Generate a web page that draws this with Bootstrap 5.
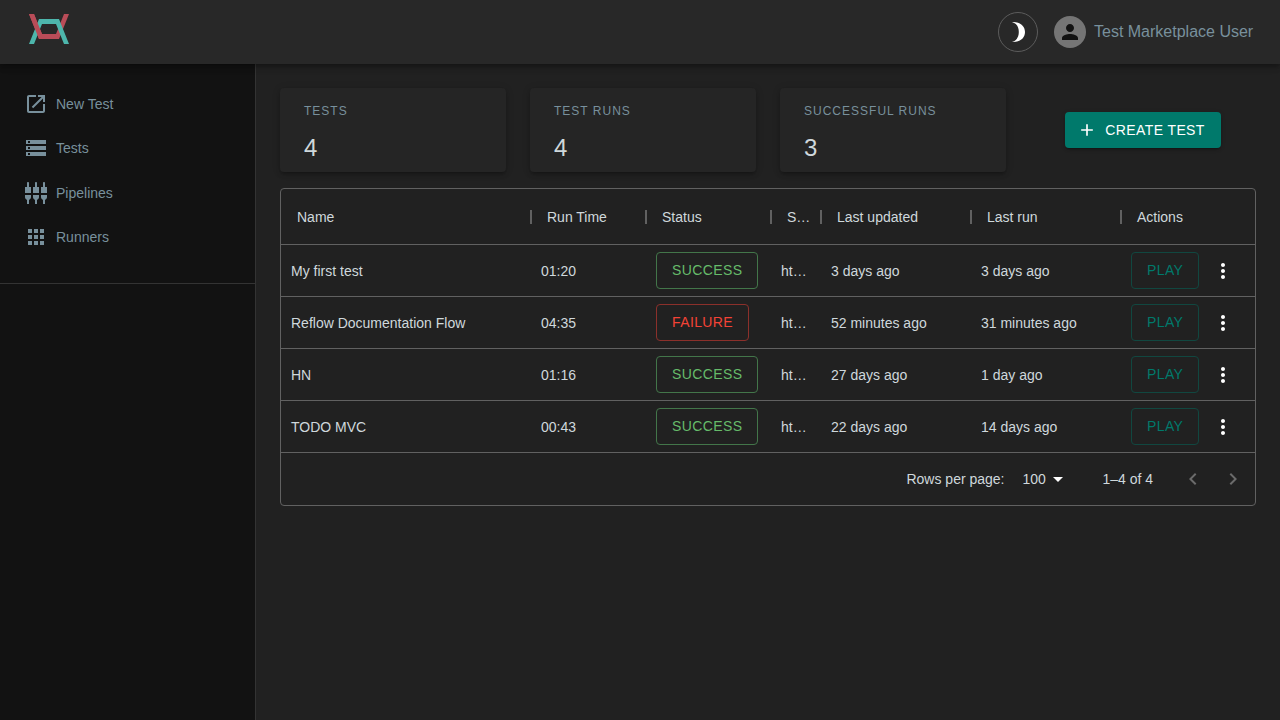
<!DOCTYPE html>
<html lang="en" data-bs-theme="dark">
<head>
<meta charset="utf-8">
<meta name="viewport" content="width=device-width, initial-scale=1">
<title>Tests</title>
<link href="https://cdn.jsdelivr.net/npm/bootstrap@5.3.0/dist/css/bootstrap.min.css" rel="stylesheet">
<style>
  :root { --muted: #78909c; --line: #616161; }
  body { background: #212121; color: #cfd8dc; font-family: "Liberation Sans", Arial, sans-serif; font-size: 14px; line-height: 20px; }
  svg { fill: currentColor; flex-shrink: 0; display: block; }
  main { min-width: 0; }
  .topbar { height: 64px; background: #282828; z-index: 2; box-shadow: 0 2px 4px -1px rgba(0,0,0,.2), 0 4px 5px rgba(0,0,0,.14), 0 1px 10px rgba(0,0,0,.12); }
  .logo-link { margin-left: 5px; margin-bottom: 6px; }
  .round-btn { width: 40px; height: 40px; border: 1px solid #5c5c5c; background: none; color: #fff; }
  .avatar { width: 32px; height: 32px; background: #757575; color: #121212; }
  .user-name { font-size: 16px; color: var(--muted); min-width: 162px; }
  .sidebar { width: 256px; background: #121212; border-right: 1px solid #333; flex-shrink: 0; }
  .side-nav { height: 220px; padding: 18px 24px 24px; border-bottom: 1px solid #333; }
  .side-nav a { color: var(--muted); }
  .stat { background: #252525; border-radius: 4px; height: 84px; padding: 4px 24px; box-shadow: 0 3px 3px -2px rgba(0,0,0,.2), 0 3px 4px rgba(0,0,0,.14), 0 1px 8px rgba(0,0,0,.12); }
  .stat dt { font-size: 12px; font-weight: 400; letter-spacing: 1px; line-height: 39px; color: var(--muted); text-transform: uppercase; }
  .stat dd { font-size: 24px; line-height: 34px; }
  .caps { font-size: 14px; letter-spacing: .028em; text-transform: uppercase; line-height: 25px; }
  .create { background: #00796b; color: #fff; border: 0; border-radius: 4px; height: 36px; padding: 0 16px 0 12px; box-shadow: 0 3px 1px -2px rgba(0,0,0,.2), 0 2px 2px rgba(0,0,0,.14), 0 1px 5px rgba(0,0,0,.12); }
  .panel { border: 1px solid var(--line); border-radius: 4px; }
  .grid-table { table-layout: fixed; width: 100%; border-collapse: separate; border-spacing: 0; }
  .grid-table th, .grid-table td { border-bottom: 1px solid var(--line); }
  .grid-table th { height: 56px; padding: 0 10px 0 16px; font-weight: 400; position: relative; }
  .grid-table th:not(:last-child)::after { content: ""; position: absolute; right: -1px; top: 21px; width: 2px; height: 14px; background: var(--line); }
  .grid-table td { height: 52px; padding: 0 10px; vertical-align: middle; }
  .col-name { width: 250px; }
  .col-time { width: 115px; }
  .col-status { width: 125px; }
  .col-url { width: 50px; }
  .col-date { width: 150px; }
  .outlined { background: none; border: 1px solid; border-radius: 4px; padding: 5px 15px; height: 37px; }
  .ok { color: #66bb6a; border-color: #43764a; }
  .bad { color: #f44336; border-color: #8b302b; }
  .go { color: #00796b; border-color: #114740; }
  .bare { background: none; border: 0; padding: 0; color: #fff; }
  .foot { height: 52px; padding-right: 2px; }
  .foot label { min-width: 100px; }
  .form-select.page-size { width: 48px; height: 24px; padding: 0 24px 0 0; font-size: 14px; line-height: 24px; color: inherit; border: 0; background-color: transparent; background-position: right center; background-size: 24px;
    background-image: url("data:image/svg+xml,%3csvg xmlns='http://www.w3.org/2000/svg' viewBox='0 0 24 24'%3e%3cpath fill='%23fff' d='M7 10l5 5 5-5z'/%3e%3c/svg%3e"); }
  .pager { width: 40px; height: 40px; color: #6b6b6b; }
</style>
</head>
<body>
<div class="d-flex flex-column min-vh-100">
  <header class="topbar d-flex align-items-center px-4 position-relative">
    <a href="#" class="logo-link" aria-label="Home">
      <svg width="40" height="30" viewBox="0 0 40 30">
        <path fill="#b94c58" d="M0 0H5L13 20H27L35 0H40L30 25H10Z"/>
        <path fill="#4db6ac" d="M0 30H5L13 10H27L35 30H40L30 5H10Z"/>
        <path fill="#b94c58" d="M0 0H5L13 20H20V25H10Z"/>
      </svg>
    </a>
    <button type="button" class="round-btn rounded-circle ms-auto me-3 p-0 d-flex align-items-center justify-content-center" aria-label="Toggle dark mode">
      <svg width="24" height="24" viewBox="0 0 24 24"><path d="M6 2C14 1.500 19 6 19 12S14 22.500 6 22C11 20.500 12.800 16.500 12.800 12S11 3.500 6 2Z"/></svg>
    </button>
    <span class="avatar rounded-circle d-flex align-items-center justify-content-center me-2">
      <svg width="24" height="24" viewBox="0 0 24 24"><path d="M12 12c2.210 0 4-1.790 4-4s-1.790-4-4-4-4 1.790-4 4 1.790 4 4 4zm0 2c-2.670 0-8 1.340-8 4v2h16v-2c0-2.660-5.330-4-8-4z"/></svg>
    </span>
    <span class="user-name">Test Marketplace User</span>
  </header>

  <div class="d-flex flex-grow-1">
    <nav class="sidebar">
      <ul class="side-nav list-unstyled d-flex flex-column mb-0">
        <li class="d-flex flex-fill align-items-center"><a href="#" class="d-flex align-items-center gap-2 text-decoration-none">
          <svg width="24" height="24" viewBox="0 0 24 24"><path d="M19 19H5V5h7V3H5c-1.110 0-2 .9-2 2v14c0 1.100.89 2 2 2h14c1.100 0 2-.9 2-2v-7h-2v7zM14 3v2h3.590l-9.830 9.830 1.410 1.410L19 6.410V10h2V3h-7z"/></svg>New Test</a></li>
        <li class="d-flex flex-fill align-items-center"><a href="#" class="d-flex align-items-center gap-2 text-decoration-none">
          <svg width="24" height="24" viewBox="0 0 24 24"><path d="M2 20h20v-4H2v4zm2-3h2v2H4v-2zM2 4v4h20V4H2zm4 3H4V5h2v2zm-4 7h20v-4H2v4zm2-3h2v2H4v-2z"/></svg>Tests</a></li>
        <li class="d-flex flex-fill align-items-center"><a href="#" class="d-flex align-items-center gap-2 text-decoration-none">
          <svg width="24" height="24" viewBox="0 0 24 24"><path d="M5 2c0-.55-.45-1-1-1s-1 .45-1 1v4H1v6h6V6H5V2zm4 14c0 1.300.84 2.400 2 2.820V23h2v-4.180c1.160-.41 2-1.510 2-2.820v-2H9v2zm-8 0c0 1.300.84 2.400 2 2.820V23h2v-4.180C6.160 18.400 7 17.300 7 16v-2H1v2zM21 6V2c0-.55-.45-1-1-1s-1 .45-1 1v4h-2v6h6V6h-2zm-8-4c0-.55-.45-1-1-1s-1 .45-1 1v4H9v6h6V6h-2V2zm4 14c0 1.300.84 2.400 2 2.820V23h2v-4.180c1.160-.41 2-1.510 2-2.820v-2h-6v2z"/></svg>Pipelines</a></li>
        <li class="d-flex flex-fill align-items-center"><a href="#" class="d-flex align-items-center gap-2 text-decoration-none">
          <svg width="24" height="24" viewBox="0 0 24 24"><path d="M4 8h4V4H4v4zm6 12h4v-4h-4v4zm-6 0h4v-4H4v4zm0-6h4v-4H4v4zm6 0h4v-4h-4v4zm6-10v4h4V4h-4zm-6 4h4V4h-4v4zm6 6h4v-4h-4v4zm0 6h4v-4h-4v4z"/></svg>Runners</a></li>
      </ul>
    </nav>

    <main class="flex-grow-1 p-4">
      <div class="row gx-4 mb-3">
        <div class="col-3"><dl class="stat mb-0"><dt>Tests</dt><dd class="mb-0">4</dd></dl></div>
        <div class="col-3"><dl class="stat mb-0"><dt>Test runs</dt><dd class="mb-0">4</dd></dl></div>
        <div class="col-3"><dl class="stat mb-0"><dt>Successful runs</dt><dd class="mb-0">3</dd></dl></div>
        <div class="col-3 d-flex align-items-center justify-content-center">
          <button type="button" class="create caps d-flex align-items-center gap-2">
            <svg width="20" height="20" viewBox="0 0 24 24"><path d="M19 13h-6v6h-2v-6H5v-2h6V5h2v6h6v2z"/></svg>
            Create test
          </button>
        </div>
      </div>

      <section class="panel">
        <table class="grid-table">
          <colgroup><col class="col-name"><col class="col-time"><col class="col-status"><col class="col-url"><col class="col-date"><col class="col-date"><col></colgroup>
          <thead>
            <tr><th>Name</th><th>Run Time</th><th>Status</th><th>S…</th><th>Last updated</th><th>Last run</th><th>Actions</th></tr>
          </thead>
          <tbody>
            <tr><td>My first test</td><td>01:20</td><td><button type="button" class="outlined caps ok">Success</button></td><td>ht…</td><td>3 days ago</td><td>3 days ago</td>
              <td><div class="d-flex align-items-center"><button type="button" class="outlined caps go">Play</button><button type="button" class="bare ms-2 ps-1" aria-label="More"><svg width="24" height="24" viewBox="0 0 24 24"><use href="#dots"/></svg></button></div></td></tr>
            <tr><td>Reflow Documentation Flow</td><td>04:35</td><td><button type="button" class="outlined caps bad">Failure</button></td><td>ht…</td><td>52 minutes ago</td><td>31 minutes ago</td>
              <td><div class="d-flex align-items-center"><button type="button" class="outlined caps go">Play</button><button type="button" class="bare ms-2 ps-1" aria-label="More"><svg width="24" height="24" viewBox="0 0 24 24"><use href="#dots"/></svg></button></div></td></tr>
            <tr><td>HN</td><td>01:16</td><td><button type="button" class="outlined caps ok">Success</button></td><td>ht…</td><td>27 days ago</td><td>1 day ago</td>
              <td><div class="d-flex align-items-center"><button type="button" class="outlined caps go">Play</button><button type="button" class="bare ms-2 ps-1" aria-label="More"><svg width="24" height="24" viewBox="0 0 24 24"><use href="#dots"/></svg></button></div></td></tr>
            <tr><td>TODO MVC</td><td>00:43</td><td><button type="button" class="outlined caps ok">Success</button></td><td>ht…</td><td>22 days ago</td><td>14 days ago</td>
              <td><div class="d-flex align-items-center"><button type="button" class="outlined caps go">Play</button><button type="button" class="bare ms-2 ps-1" aria-label="More"><svg width="24" height="24" viewBox="0 0 24 24"><use href="#dots"/></svg></button></div></td></tr>
          </tbody>
        </table>
        <div class="foot d-flex align-items-center justify-content-end">
          <label for="page-size" class="me-3">Rows per page:</label>
          <select id="page-size" class="form-select page-size"><option>25</option><option>50</option><option selected>100</option></select>
          <span class="ms-4 ps-2 me-3">1–4 of 4</span>
          <button type="button" class="bare pager d-flex align-items-center justify-content-center ms-1" aria-label="Previous page"><svg width="24" height="24" viewBox="0 0 24 24"><path d="M15.410 16.590L10.830 12l4.580-4.590L14 6l-6 6 6 6 1.410-1.410z"/></svg></button>
          <button type="button" class="bare pager d-flex align-items-center justify-content-center" aria-label="Next page"><svg width="24" height="24" viewBox="0 0 24 24"><path d="M8.590 16.590L13.170 12 8.590 7.410 10 6l6 6-6 6-1.410-1.410z"/></svg></button>
        </div>
      </section>
    </main>
  </div>
</div>
<svg width="0" height="0" class="position-absolute" aria-hidden="true"><symbol id="dots" viewBox="0 0 24 24"><path d="M12 8c1.100 0 2-.9 2-2s-.9-2-2-2-2 .9-2 2 .9 2 2 2zm0 2c-1.100 0-2 .9-2 2s.9 2 2 2 2-.9 2-2-.9-2-2-2zm0 6c-1.100 0-2 .9-2 2s.9 2 2 2 2-.9 2-2-.9-2-2-2z"/></symbol></svg>
<script src="https://cdn.jsdelivr.net/npm/bootstrap@5.3.0/dist/js/bootstrap.bundle.min.js"></script>
</body>
</html>
